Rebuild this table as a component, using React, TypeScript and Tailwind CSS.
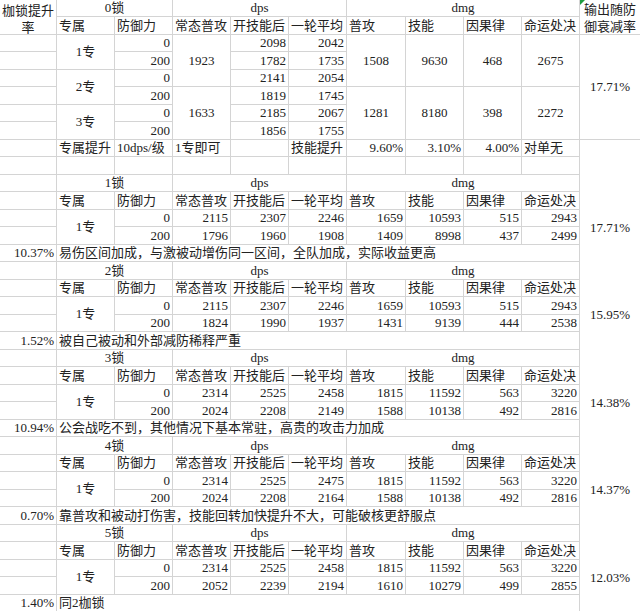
import type { ReactNode } from 'react';

type Align = 'l' | 'c' | 'r';

const COLS: Record<number, string> = { 1: '', 2: 'col-span-2', 3: 'col-span-3', 4: 'col-span-4', 9: 'col-span-9' };
const ROWS: Record<number, string> = { 1: '', 2: 'row-span-2', 3: 'row-span-3', 6: 'row-span-6' };

interface CellProps {
  children?: ReactNode;
  cs?: number;
  rs?: number;
  a?: Align;
  mid?: boolean;
  noB?: boolean;
  noR?: boolean;
  extra?: string;
}

// one spreadsheet cell, gridlines drawn as right/bottom borders
function Cell({ children, cs = 1, rs = 1, a = 'l', mid = false, noB = false, noR = false, extra = '' }: CellProps) {
  const justify = a === 'r' ? 'justify-end' : a === 'c' ? 'justify-center' : 'justify-start';
  return (
    <div
      className={[
        'flex min-w-0 overflow-visible whitespace-nowrap px-[2px] border-[#d4d4d4]',
        COLS[cs],
        ROWS[rs],
        justify,
        mid || rs > 1 ? 'items-center' : 'items-end pb-[1px]',
        noB ? '' : 'border-b',
        noR ? '' : 'border-r',
        a === 'c' ? 'text-center' : '',
        extra,
      ].join(' ')}
    >
      {children}
    </div>
  );
}

const LABELS = ['专属', '防御力', '常态普攻', '开技能后', '一轮平均', '普攻', '技能', '因果律', '命运处决'];

function LockRow({ name }: { name: string }) {
  return (
    <>
      <Cell />
      <Cell cs={2} a="c">{name}</Cell>
      <Cell cs={3} a="c">dps</Cell>
      <Cell cs={4} a="c">dmg</Cell>
      <Cell noB noR />
    </>
  );
}

function LabelRow({ withEdges = true }: { withEdges?: boolean }) {
  return (
    <>
      {withEdges && <Cell />}
      {LABELS.map((l) => (
        <Cell key={l}>{l}</Cell>
      ))}
      {withEdges && <Cell noB noR />}
    </>
  );
}

interface Block {
  lock: string;
  r0: string[];
  r200: string[];
  pct: string;
  gain: string;
  note: string;
}

const BLOCKS: Block[] = [
  {
    lock: '1锁',
    r0: ['2115', '2307', '2246', '1659', '10593', '515', '2943'],
    r200: ['1796', '1960', '1908', '1409', '8998', '437', '2499'],
    pct: '17.71%',
    gain: '10.37%',
    note: '易伤区间加成，与激被动增伤同一区间，全队加成，实际收益更高',
  },
  {
    lock: '2锁',
    r0: ['2115', '2307', '2246', '1659', '10593', '515', '2943'],
    r200: ['1824', '1990', '1937', '1431', '9139', '444', '2538'],
    pct: '15.95%',
    gain: '1.52%',
    note: '被自己被动和外部减防稀释严重',
  },
  {
    lock: '3锁',
    r0: ['2314', '2525', '2458', '1815', '11592', '563', '3220'],
    r200: ['2024', '2208', '2149', '1588', '10138', '492', '2816'],
    pct: '14.38%',
    gain: '10.94%',
    note: '公会战吃不到，其他情况下基本常驻，高贵的攻击力加成',
  },
  {
    lock: '4锁',
    r0: ['2314', '2525', '2475', '1815', '11592', '563', '3220'],
    r200: ['2024', '2208', '2164', '1588', '10138', '492', '2816'],
    pct: '14.37%',
    gain: '0.70%',
    note: '靠普攻和被动打伤害，技能回转加快提升不大，可能破核更舒服点',
  },
  {
    lock: '5锁',
    r0: ['2314', '2525', '2458', '1815', '11592', '563', '3220'],
    r200: ['2052', '2239', '2194', '1610', '10279', '499', '2855'],
    pct: '12.03%',
    gain: '1.40%',
    note: '同2枷锁',
  },
];

function LockBlock({ b }: { b: Block }) {
  return (
    <>
      <LockRow name={b.lock} />
      <LabelRow />
      {/* defence 0 */}
      <Cell />
      <Cell rs={2} a="c">1专</Cell>
      <Cell a="r">0</Cell>
      {b.r0.map((v, i) => (
        <Cell key={'a' + i} a="r">{v}</Cell>
      ))}
      <Cell rs={2} a="c" noB noR>{b.pct}</Cell>
      {/* defence 200 */}
      <Cell />
      <Cell a="r">200</Cell>
      {b.r200.map((v, i) => (
        <Cell key={'b' + i} a="r">{v}</Cell>
      ))}
      {/* note */}
      <Cell a="r">{b.gain}</Cell>
      <Cell cs={9}>{b.note}</Cell>
      <Cell noB noR />
    </>
  );
}

export default function App() {
  return (
    <div className="w-[640px] h-[611px] overflow-hidden bg-white text-[13px] leading-[14px] text-[#222] font-['Liberation_Serif','Noto_Sans_CJK_SC',serif]">
      <div className="grid grid-cols-[57px_58px_58px_58px_58px_58px_59px_58px_58px_58px_60px] grid-rows-[repeat(17,17px_18px)_17px]">
        {/* 0锁 header */}
        <Cell rs={2} a="c" extra="leading-[17px] pt-[3px]">
          <span>枷锁提升<br />率</span>
        </Cell>
        <Cell cs={2} a="c">0锁</Cell>
        <Cell cs={3} a="c">dps</Cell>
        <Cell cs={4} a="c">dmg</Cell>
        <Cell rs={2} a="c" noR extra="relative leading-[17px] pt-[2px]">
          <span className="absolute left-0 top-0 h-0 w-0 border-t-[5px] border-r-[5px] border-t-[#1f9d3f] border-r-transparent" />
          <span>输出随防<br />御衰减率</span>
        </Cell>
        <LabelRow withEdges={false} />

        {/* 1专 */}
        <Cell />
        <Cell rs={2} a="c">1专</Cell>
        <Cell a="r">0</Cell>
        <Cell rs={3} a="c">1923</Cell>
        <Cell a="r">2098</Cell>
        <Cell a="r">2042</Cell>
        <Cell rs={3} a="c">1508</Cell>
        <Cell rs={3} a="c">9630</Cell>
        <Cell rs={3} a="c">468</Cell>
        <Cell rs={3} a="c">2675</Cell>
        <Cell rs={6} a="c" noR>17.71%</Cell>

        <Cell />
        <Cell a="r">200</Cell>
        <Cell a="r">1782</Cell>
        <Cell a="r">1735</Cell>

        {/* 2专 */}
        <Cell />
        <Cell rs={2} a="c">2专</Cell>
        <Cell a="r">0</Cell>
        <Cell a="r">2141</Cell>
        <Cell a="r">2054</Cell>

        <Cell />
        <Cell a="r">200</Cell>
        <Cell rs={3} a="c">1633</Cell>
        <Cell a="r">1819</Cell>
        <Cell a="r">1745</Cell>
        <Cell rs={3} a="c">1281</Cell>
        <Cell rs={3} a="c">8180</Cell>
        <Cell rs={3} a="c">398</Cell>
        <Cell rs={3} a="c">2272</Cell>

        {/* 3专 */}
        <Cell />
        <Cell rs={2} a="c">3专</Cell>
        <Cell a="r">0</Cell>
        <Cell a="r">2185</Cell>
        <Cell a="r">2067</Cell>

        <Cell />
        <Cell a="r">200</Cell>
        <Cell a="r">1856</Cell>
        <Cell a="r">1755</Cell>

        {/* 专属提升 */}
        <Cell />
        <Cell>专属提升</Cell>
        <Cell>10dps/级</Cell>
        <Cell>1专即可</Cell>
        <Cell />
        <Cell>技能提升</Cell>
        <Cell a="r">9.60%</Cell>
        <Cell a="r">3.10%</Cell>
        <Cell a="r">4.00%</Cell>
        <Cell>对单无</Cell>
        <Cell noB noR />

        {/* spacer row */}
        {Array.from({ length: 10 }).map((_, i) => (
          <Cell key={'s' + i} />
        ))}
        <Cell noB noR />

        {BLOCKS.map((b) => (
          <LockBlock key={b.lock} b={b} />
        ))}
      </div>
    </div>
  );
}
